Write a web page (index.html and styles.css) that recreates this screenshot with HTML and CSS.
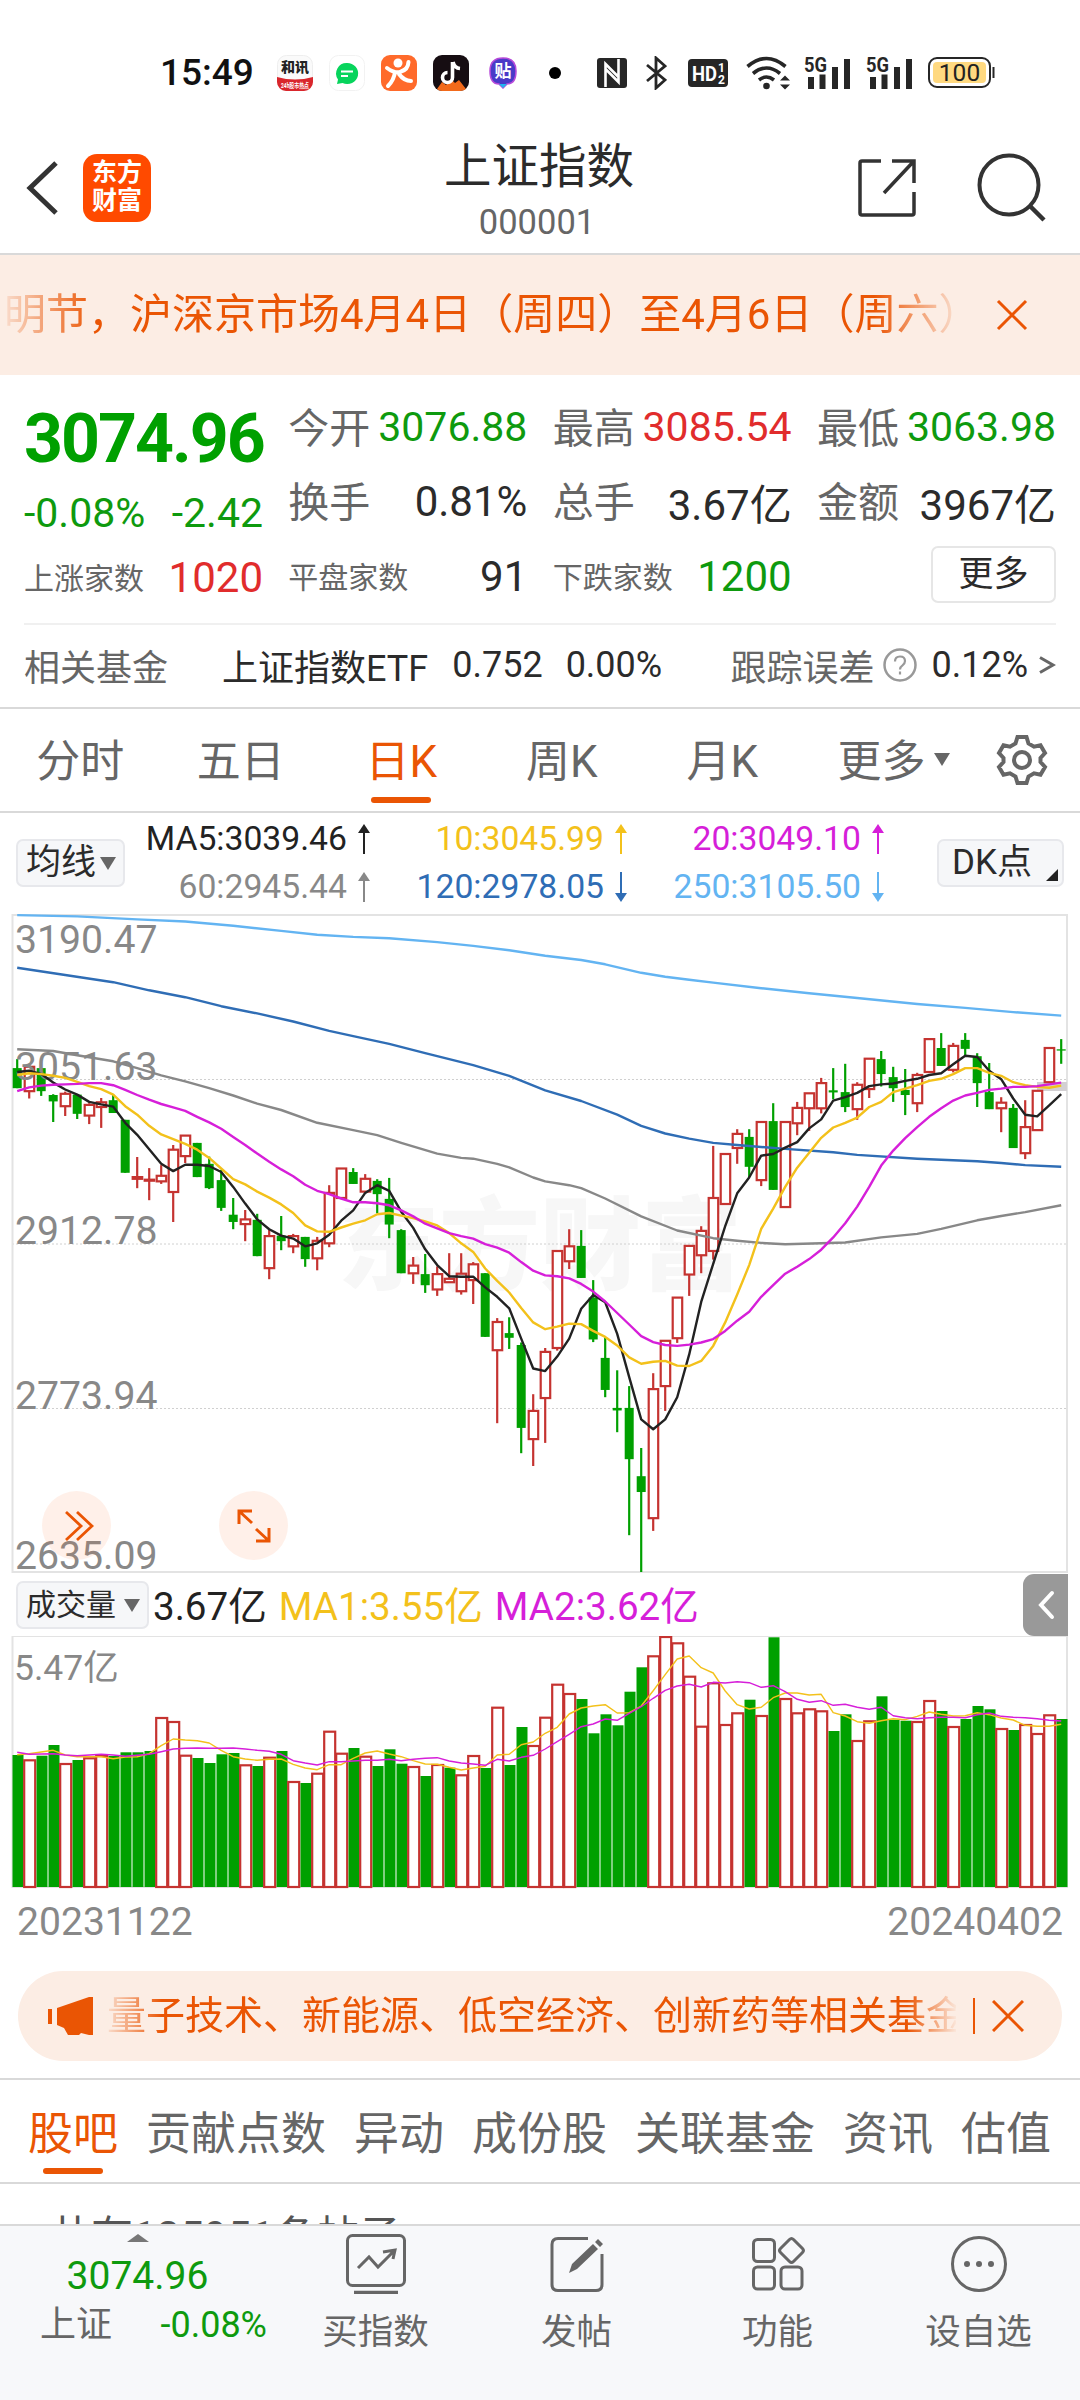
FILE: index.html
```html
<!DOCTYPE html>
<html lang="zh-CN">
<head>
  <meta charset="UTF-8">
  <title>上证指数 000001</title>
  <link rel="stylesheet" href="styles.css">
</head>
<body>

<!-- 状态栏 -->
<div class="status">
  <span class="time">15:49</span>
  <svg class="app app-hx" width="36" height="36" viewBox="0 0 36 36">
    <rect x=".5" y=".5" width="35" height="35" rx="9" fill="#fafafa" stroke="#eee"/>
    <path d="M0 22q18 5 36 0v5a9 9 0 0 1-9 9H9a9 9 0 0 1-9-9z" fill="#d9262c"/>
    <text x="18" y="17" font-size="14" font-weight="900" text-anchor="middle" fill="#222">和讯</text>
    <text x="18" y="32.500" font-size="6.500" font-weight="700" text-anchor="middle" fill="#fff" textLength="28" lengthAdjust="spacingAndGlyphs">24h股市热点</text>
  </svg>
  <svg class="app" width="36" height="36" viewBox="0 0 36 36">
    <rect x=".5" y=".5" width="35" height="35" rx="9" fill="#fff" stroke="#f2f2f2"/>
    <path d="M18 8a11 10.500 0 1 1-4.500 20L8 29l1-4.500A10.500 10.500 0 0 1 18 8z" fill="#07d45c"/>
    <path d="M12 16.500h12M12 21h7" stroke="#fff" stroke-width="2"/>
  </svg>
  <svg class="app" width="36" height="36" viewBox="0 0 36 36">
    <rect width="36" height="36" rx="9" fill="#ff6a2b"/>
    <circle cx="17" cy="8" r="4.500" fill="#fff"/>
    <path d="M6 13q8 6 14 3.500q7-2 7.500-9.500M14 17q-1 8-7 14M18 19q5 7 12 7" fill="none" stroke="#fff" stroke-width="4" stroke-linecap="round"/>
  </svg>
  <svg class="app" width="36" height="36" viewBox="0 0 36 36">
    <rect width="36" height="36" rx="9" fill="#160d12"/>
    <path d="M4 34l5-7 4 3 5-6 4 4 4-3 7 9q-3 2-6 2H9q-3 0-5-2z" fill="#f26a1b"/>
    <path d="M19.500 7v15.500a5 5 0 1 1-5-5M20 7q1.500 6 7 6.500" fill="none" stroke="#fff" stroke-width="3.600"/>
  </svg>
  <svg class="app app-tie" width="28" height="32" viewBox="0 0 28 32">
    <path d="M14 1q13 0 13 13t-9 13l-4 4-4-4Q1 27 1 14T14 1z" fill="#4a3ac8" stroke="#b74ad9" stroke-width="1.500"/>
    <path d="M10 27l4 4 4-4z" fill="#20b4ee"/>
    <text x="14" y="20" font-size="17" font-weight="700" text-anchor="middle" fill="#fff">贴</text>
  </svg>
  <i class="more-dot"></i>
  <svg class="nfc" width="30" height="30" viewBox="0 0 30 30">
    <rect width="30" height="30" rx="3" fill="#262626"/>
    <path d="M8.500 29V6l13 13M21.500 1v23l-13-13" fill="none" stroke="#fff" stroke-width="2.600"/>
  </svg>
  <svg class="bt" width="21" height="34" viewBox="0 0 21 34">
    <path d="M1 9l18 15-9 8V2l9 8L1 25" fill="none" stroke="#262626" stroke-width="2.800"/>
  </svg>
  <svg class="hd" width="40" height="28" viewBox="0 0 40 28">
    <rect width="40" height="28" rx="4" fill="#262626"/>
    <text x="4" y="21.500" font-size="21" font-weight="700" fill="#fff" textLength="25" lengthAdjust="spacingAndGlyphs">HD</text>
    <text x="30" y="13" font-size="12" font-weight="700" fill="#fff">1</text>
    <text x="30" y="25" font-size="12" font-weight="700" fill="#fff">2</text>
  </svg>
  <svg class="wifi" width="45" height="34" viewBox="0 0 45 34">
    <path d="M1.500 10.500q19-16 38 0M7 17.500q13.500-11 27 0M13 24q7.500-6 15 0" fill="none" stroke="#262626" stroke-width="3.600"/>
    <circle cx="20.500" cy="30" r="3.300" fill="#262626"/>
    <path d="M34 24.500l5-5 5 5zM34 28.500l5 5 5-5z" fill="#262626"/>
  </svg>
  <svg class="signal" width="46" height="34" viewBox="0 0 46 34">
    <text x="0" y="16" font-size="20" font-weight="700" fill="#262626" textLength="23" lengthAdjust="spacingAndGlyphs">5G</text>
    <path d="M7 21v12M18.500 18.500V33M31 11v22M43 3v30" stroke="#262626" stroke-width="6"/>
  </svg>
  <svg class="signal" width="46" height="34" viewBox="0 0 46 34">
    <text x="0" y="16" font-size="20" font-weight="700" fill="#262626" textLength="23" lengthAdjust="spacingAndGlyphs">5G</text>
    <path d="M7 21v12M18.500 18.500V33M31 11v22M43 3v30" stroke="#262626" stroke-width="6"/>
  </svg>
  <svg class="battery" width="67" height="31" viewBox="0 0 67 31">
    <rect x="1" y="1" width="61" height="29" rx="8" fill="#fff" stroke="#262626" stroke-width="2"/>
    <rect x="5" y="5" width="53" height="21" rx="4" fill="#ffd980"/>
    <path d="M65.500 10v11" stroke="#262626" stroke-width="2"/>
    <text x="31.500" y="24" font-size="24.500" text-anchor="middle" fill="#222">100</text>
  </svg>
</div>

<!-- 标题 -->
<div class="header">
  <svg class="back" width="33" height="56" viewBox="0 0 33 56"><path d="M30 3L4 28l26 25" fill="none" stroke="#333" stroke-width="5"/></svg>
  <div class="logo"><span>东方</span><span>财富</span></div>
  <div class="title">
    <h1>上证指数</h1>
    <p>000001</p>
  </div>
  <svg class="share" width="60" height="60" viewBox="0 0 60 60">
    <path d="M24 3H5q-2 0-2 2v50q0 2 2 2h50q2 0 2-2V34M35 3h22v22M57 3L27 35" fill="none" stroke="#333" stroke-width="3.500"/>
  </svg>
  <svg class="search" width="70" height="70" viewBox="0 0 70 70">
    <circle cx="32" cy="32" r="29.500" fill="none" stroke="#333" stroke-width="4"/>
    <path d="M53 53l14 14" stroke="#333" stroke-width="4.500"/>
  </svg>
</div>

<!-- 公告 -->
<div class="notice">
  <div class="notice-text">明节，沪深京市场4月4日（周四）至4月6日（周六）</div>
  <svg width="32" height="32" viewBox="0 0 32 32"><path d="M2 2l28 28M30 2L2 30" stroke="#ea5504" stroke-width="3"/></svg>
</div>

<!-- 行情摘要 -->
<div class="quote">
  <div class="q-col q-main">
    <div class="price">3074.96</div>
    <div class="pair change"><b>-0.08%</b><b>-2.42</b></div>
    <div class="pair small"><span>上涨家数</span><b class="red">1020</b></div>
  </div>
  <div class="q-col">
    <div class="pair"><span>今开</span><b class="green">3076.88</b></div>
    <div class="pair wide"><span>换手</span><b>0.81%</b></div>
    <div class="pair small"><span>平盘家数</span><b>91</b></div>
  </div>
  <div class="q-col">
    <div class="pair"><span>最高</span><b class="red">3085.54</b></div>
    <div class="pair wide"><span>总手</span><b>3.67亿</b></div>
    <div class="pair small"><span>下跌家数</span><b class="green">1200</b></div>
  </div>
  <div class="q-col">
    <div class="pair"><span>最低</span><b class="green">3063.98</b></div>
    <div class="pair wide"><span>金额</span><b>3967亿</b></div>
    <div class="pair small more-row"><a class="more-btn">更多</a></div>
  </div>
</div>
<div class="fund">
  <span class="muted">相关基金</span>
  <span class="fund-name">上证指数ETF</span>
  <span class="fund-price">0.752</span>
  <span class="fund-rate">0.00%</span>
  <span class="muted fund-err">跟踪误差</span>
  <svg width="34" height="34" viewBox="0 0 34 34">
    <circle cx="17" cy="17" r="15.500" fill="none" stroke="#999" stroke-width="2.500"/>
    <path d="M12 13.500q0-5 5-5t5 4.500q0 2.500-2.500 4.300Q17 19 17 21.500M17 23.500v3" fill="none" stroke="#999" stroke-width="2.200"/>
  </svg>
  <span>0.12%</span>
  <svg class="fund-go" width="17" height="18" viewBox="0 0 17 18"><path d="M1 1.500L14 9 1 16.500" fill="none" stroke="#666" stroke-width="3"/></svg>
</div>

<!-- 周期切换 -->
<div class="tabs">
  <a>分时</a>
  <a>五日</a>
  <a class="active">日K</a>
  <a>周K</a>
  <a>月K</a>
  <a class="tab-more">更多<i class="tri"></i></a>
  <svg width="52" height="52" viewBox="0 0 52 52" fill="none" stroke="#666" stroke-width="4">
    <path d="M21.500 3h9l2 6.500 5.500 3.200 6.500-1.500 4.500 7.800-4.500 5v4l4.500 5-4.500 7.800-6.500-1.500-5.500 3.200-2 6.500h-9l-2-6.500-5.500-3.200-6.500 1.500L3 33l4.500-5v-4L3 19l4.500-7.800 6.500 1.500 5.500-3.200z"/>
    <circle cx="26" cy="26" r="8"/>
  </svg>
</div>

<!-- 均线数值 -->
<div class="ma">
  <a class="chip">均线<i class="tri"></i></a>
  <div class="ma-grid">
    <span class="c5">MA5:3039.46<svg class="arrow"><use href="#up"/></svg></span>
    <span class="c10">10:3045.99<svg class="arrow"><use href="#up"/></svg></span>
    <span class="c20">20:3049.10<svg class="arrow"><use href="#up"/></svg></span>
    <span class="c60">60:2945.44<svg class="arrow"><use href="#up"/></svg></span>
    <span class="c120">120:2978.05<svg class="arrow"><use href="#down"/></svg></span>
    <span class="c250">250:3105.50<svg class="arrow"><use href="#down"/></svg></span>
  </div>
  <a class="chip dk">DK点<i class="corner"></i></a>
</div>
<svg class="defs">
  <symbol id="up" viewBox="0 0 12 30"><path d="M6 5v25" stroke="currentColor" stroke-width="2"/><path d="M0 9l6-9 6 9z" fill="currentColor"/></symbol>
  <symbol id="down" viewBox="0 0 12 30"><path d="M6 0v25" stroke="currentColor" stroke-width="2"/><path d="M0 21l6 9 6-9z" fill="currentColor"/></symbol>
</svg>

<!-- K线图 -->
<div class="kline">
  <svg id="kline" width="1080" height="664" viewBox="0 0 1080 664"></svg>
  <div class="round round-left">
    <svg width="30" height="32" viewBox="0 0 30 32"><path d="M2 2l15 14L2 30M13 2l15 14-15 14" fill="none" stroke="#ea5504" stroke-width="2.800"/></svg>
  </div>
  <div class="round round-right">
    <svg width="34" height="34" viewBox="0 0 34 34"><path d="M15 2H2v13M2 2l13 12M32 19v13H19M32 32L19 20" fill="none" stroke="#ea5504" stroke-width="3"/></svg>
  </div>
</div>

<!-- 成交量 -->
<div class="vol-head">
  <a class="chip vol-chip">成交量<i class="tri"></i></a>
  <span class="c5">3.67亿</span>
  <span class="c10">MA1:3.55亿</span>
  <span class="c20">MA2:3.62亿</span>
  <div class="handle"><svg width="18" height="30" viewBox="0 0 18 30"><path d="M15 3L4 15l11 12" fill="none" stroke="#fff" stroke-width="4" stroke-linecap="round"/></svg></div>
</div>
<svg id="volume" width="1080" height="254" viewBox="0 0 1080 254"></svg>
<div class="dates"><span>20231122</span><span>20240402</span></div>

<!-- 推荐条 -->
<div class="banner">
  <svg class="horn" width="46" height="42" viewBox="0 0 46 42">
    <path d="M0 14h4v15H0zM9 13L41 2h4v38h-4l-8-2-2 2H20l-4-7-7-3z" fill="#ea5504"/>
  </svg>
  <div class="banner-text">量子技术、新能源、低空经济、创新药等相关基金</div>
  <i class="bar"></i>
  <svg width="32" height="32" viewBox="0 0 32 32"><path d="M1 1l30 30M31 1L1 31" stroke="#ea5504" stroke-width="3"/></svg>
</div>

<!-- 内容标签 -->
<div class="sections">
  <a class="active">股吧</a><a>贡献点数</a><a>异动</a><a>成份股</a><a>关联基金</a><a>资讯</a><a>估值</a>
</div>
<div class="posts">共有125951条帖子</div>

<!-- 底部栏 -->
<div class="bottom">
  <div class="index">
    <i class="tri-up"></i>
    <div class="index-price">3074.96</div>
    <div class="index-row"><span>上证</span><b>-0.08%</b></div>
  </div>
  <a>
    <svg width="60" height="60" viewBox="0 0 60 60" fill="none" stroke="#666" stroke-width="3">
      <rect x="1.500" y="1.500" width="57" height="50" rx="5"/><path d="M8 58.500h44" stroke-width="3.500"/>
      <path d="M12 34l11-11 9 10 16-16M37 18l12-2-2 9"/>
    </svg>
    <span>买指数</span>
  </a>
  <a>
    <svg width="60" height="60" viewBox="0 0 60 60" fill="none" stroke="#666" stroke-width="3">
      <path d="M41 4.500H11q-6 0-6 6v40q0 6 6 6h38q6 0 6-6V20"/>
      <path d="M22 39l3-9 21-20 5 5-21 20z M48 8l3-3 5 5-3 3z" fill="#666" stroke="none"/>
    </svg>
    <span>发帖</span>
  </a>
  <a>
    <svg width="60" height="60" viewBox="0 0 60 60" fill="none" stroke="#666" stroke-width="3">
      <rect x="5.500" y="5.500" width="21" height="22" rx="4"/><rect x="5.500" y="33" width="21" height="22" rx="4"/><rect x="33" y="33" width="21" height="22" rx="4"/>
      <path d="M41.500 5.500q2-2 4 0l9 9q2 2 0 4l-9 9q-2 2-4 0l-9-9q-2-2 0-4z"/>
    </svg>
    <span>功能</span>
  </a>
  <a>
    <svg width="60" height="60" viewBox="0 0 60 60">
      <circle cx="30" cy="30" r="26.500" fill="none" stroke="#666" stroke-width="3"/>
      <circle cx="18" cy="30" r="3" fill="#666"/><circle cx="30" cy="30" r="3" fill="#666"/><circle cx="42" cy="30" r="3" fill="#666"/>
    </svg>
    <span>设自选</span>
  </a>
</div>

<script src="script.js"></script>
</body>
</html>
```

FILE: styles.css
```css
/* 基本 */
* {
  box-sizing: border-box;
}
body {
  margin: 0;
  width: 1080px;
  height: 2400px;
  overflow: hidden;
  background: #fff;
  color: #2b2b2b;
  font-family: Roboto, "Noto Sans CJK SC", sans-serif;
}
svg {
  display: block;
  flex: none;
}
b, h1 {
  font-weight: 400;
}
.red { color: #e12c2c; }
.green { color: #0e9a0e; }
.muted { color: #666; }
.defs {
  display: none;
}

/* 状态栏 */
.status {
  height: 114px;
  padding: 31px 0 0 160px;
  display: flex;
  align-items: center;
}
.status .time {
  width: 117px;
  font-size: 37px;
  font-weight: 500;
  line-height: 50px;
  color: #111;
}
.app {
  margin-right: 16px;
}
.app-tie {
  margin: 0 32px 0 4px;
}
.more-dot {
  width: 12px;
  height: 12px;
  border-radius: 50%;
  background: #000;
  margin-right: 36px;
}
.nfc { margin-right: 19px; }
.bt { margin-right: 21px; }
.hd { margin-right: 18px; }
.wifi { margin-right: 13px; }
.signal {
  margin-right: 16px;
  overflow: visible;
}

/* 标题 */
.header {
  position: relative;
  height: 141px;
  border-bottom: 2px solid #d9d9d9;
  display: flex;
  align-items: center;
  padding: 8px 33px 0 26px;
}
.logo {
  width: 68px;
  height: 68px;
  margin-left: 24px;
  border-radius: 14px;
  background: #ff4a00;
  color: #fff;
  font-size: 25px;
  font-weight: 700;
  line-height: 28px;
  padding-top: 5px;
  text-align: center;
}
.logo span {
  display: block;
}
.title {
  position: absolute;
  left: 0;
  right: 6px;
  top: 22px;
  text-align: center;
}
.title h1 {
  margin: 0;
  padding-left: 4px;
  font-size: 47.5px;
  line-height: 62px;
}
.title p {
  margin: 4px 0 0;
  font-size: 34.500px;
  line-height: 40px;
  color: #666;
}
.share {
  margin-left: auto;
}
.search {
  margin-left: 60px;
}

/* 公告 */
.notice {
  height: 120px;
  background: #fcede4;
  color: #ea5504;
  display: flex;
  align-items: center;
  padding: 0 52px 0 4px;
  justify-content: space-between;
}
.notice-text {
  width: 952px;
  overflow: hidden;
  white-space: nowrap;
  font-size: 42px;
  line-height: 60px;
  -webkit-mask-image: linear-gradient(to right, rgba(0,0,0,.1), #000 90px, #000 870px, rgba(0,0,0,.1));
}

/* 行情摘要 */
.quote {
  height: 250px;
  margin: 0 24px;
  padding-top: 15px;
  display: flex;
  justify-content: space-between;
  border-bottom: 2px solid #f0f0f0;
}
.q-col {
  width: 239px;
}
.pair {
  height: 74.500px;
  display: flex;
  align-items: center;
  justify-content: space-between;
  font-size: 41px;
  white-space: nowrap;
}
.pair span {
  color: #666;
  padding-bottom: 5px;
}
.wide b,
.small b {
  font-size: 42px;
}
.small span {
  font-size: 30px;
  padding-bottom: 2px;
}
.price {
  height: 95px;
  line-height: 98px;
  font-size: 68px;
  font-weight: 700;
  color: #00a000;
  letter-spacing: -2px;
}
.pair.change {
  height: 56px;
  color: #0e9a0e;
}
.q-main .small {
  height: 72px;
}
.more-row {
  justify-content: flex-end;
  padding-bottom: 4px;
}
.more-btn {
  width: 125px;
  height: 57px;
  line-height: 53px;
  border: 2px solid #e6e6e6;
  border-radius: 7px;
  font-size: 35px;
  text-align: center;
}

/* 相关基金 */
.fund {
  height: 84px;
  border-bottom: 2px solid #d9d9d9;
  padding: 0 24px 2px;
  display: flex;
  align-items: center;
  font-size: 36px;
  white-space: nowrap;
}
.fund-name { margin-left: 54px; }
.fund-price { margin-left: 24px; }
.fund-rate { margin-left: 23px; }
.fund-err {
  margin: 0 9px 0 auto;
}
.fund-err + svg {
  margin-right: 14px;
}
.fund-go {
  margin-left: 11px;
}

/* 周期切换 */
.tabs {
  height: 104px;
  border-bottom: 2px solid #d9d9d9;
  display: flex;
  align-items: center;
  font-size: 44px;
  color: #666;
}
.tabs a {
  position: relative;
  width: 160.500px;
  padding-top: 5px;
  text-align: center;
  line-height: 97px;
}
.active {
  color: #ea5504;
}
.active::after {
  content: "";
  position: absolute;
  left: 50%;
  bottom: 8px;
  width: 60px;
  height: 6px;
  margin-left: -30px;
  border-radius: 3px;
  background: #ea5504;
}
.tabs .tab-more {
  width: 112px;
  margin: 0 46px 0 35px;
  display: flex;
  align-items: center;
  justify-content: space-between;
}
.tri {
  border: 8px solid transparent;
  border-top: 13px solid #666;
  border-bottom: 0;
}
.tab-more .tri {
  margin-bottom: 6px;
}

/* 均线数值 */
.ma {
  height: 97px;
  padding: 3px 16px 0;
  display: flex;
  justify-content: space-between;
  align-items: center;
}
.chip {
  height: 48px;
  border: 2px solid #e7e8ec;
  border-radius: 7px;
  background: #f6f7f9;
  display: flex;
  align-items: center;
  justify-content: space-between;
  font-size: 35px;
  line-height: 44px;
  padding: 0 7px 0 8px;
  width: 109px;
}
.dk {
  width: 127px;
  padding: 0 4px 0 13px;
}
.corner {
  align-self: flex-end;
  margin-bottom: 4px;
  border-left: 12px solid transparent;
  border-bottom: 12px solid #222;
}
.ma-grid {
  flex: 1;
  display: grid;
  grid-template-columns: 245px 257px 257px;
  line-height: 48px;
  font-size: 33.700px;
}
.ma-grid span {
  display: flex;
  align-items: center;
  justify-content: flex-end;
}
.arrow {
  width: 12px;
  height: 30px;
  margin-left: 11px;
}
.c5 { color: #222; }
.c10 { color: #f3c11b; }
.c20 { color: #d61fd9; }
.c60 { color: #888; }
.c120 { color: #2f6db5; }
.c250 { color: #63b4f2; }

/* K线图 */
.kline {
  position: relative;
  height: 664px;
}
.round {
  position: absolute;
  top: 581px;
  width: 69px;
  height: 69px;
  border-radius: 50%;
  background: rgba(255, 110, 40, .1);
  display: flex;
  align-items: center;
  justify-content: center;
}
.round-left {
  left: 42px;
  padding-left: 5px;
}
.round-right { left: 219px; }
.axis {
  font-size: 39.200px;
  fill: #888;
}
.axis-vol {
  font-size: 35.500px;
}
.mark {
  font-size: 101px;
  font-weight: 900;
  fill: #f7f7f7;
}
.frame {
  fill: none;
  stroke: #e3e3e3;
  stroke-width: 2;
}
.grid {
  stroke: #d0d0d0;
  stroke-width: 1;
  stroke-dasharray: 2 2;
}
.up {
  fill: #fff;
  stroke: #c53330;
  stroke-width: 2.200;
}
.down {
  fill: #00a000;
}
.wick-up { stroke: #c53330; stroke-width: 2.200; }
.wick-down { stroke: #00a000; stroke-width: 2.200; }
.line {
  fill: none;
  stroke: currentColor;
  stroke-width: 2.400;
  stroke-linejoin: round;
}
.thin {
  stroke-width: 1.400;
}

/* 成交量 */
.vol-head {
  height: 62px;
  padding: 0 12px 0 16px;
  display: flex;
  align-items: center;
  font-size: 38.600px;
}
.vol-head span {
  margin-right: 12px;
  padding-bottom: 5px;
}
.vol-chip {
  width: 133px;
  margin-right: 4px;
  font-size: 30px;
}
.handle {
  width: 45px;
  height: 62px;
  margin-left: auto;
  border-radius: 11px 0 0 11px;
  background: #999;
  display: flex;
  align-items: center;
  justify-content: center;
}
.dates {
  height: 81px;
  padding: 6px 17px 0;
  display: flex;
  justify-content: space-between;
  font-size: 39.100px;
  line-height: 52px;
  color: #888;
}

/* 推荐条 */
.banner {
  height: 90px;
  margin: 0 18px;
  padding: 0 38px 0 30px;
  border-radius: 45px;
  background: #fcede4;
  color: #ea5504;
  display: flex;
  align-items: center;
}
.banner-text {
  width: 850px;
  margin-left: 13px;
  overflow: hidden;
  white-space: nowrap;
  font-size: 39px;
  line-height: 56px;
  -webkit-mask-image: linear-gradient(to right, rgba(0,0,0,.1), #000 55px, #000 800px, rgba(0,0,0,.05));
}
.bar {
  width: 2px;
  height: 36px;
  margin: 0 17px;
  background: #ea5504;
}

/* 内容标签 */
.sections {
  height: 106px;
  margin-top: 17px;
  border-top: 2px solid #d9d9d9;
  border-bottom: 2px solid #d9d9d9;
  padding: 2px 0 0 28px;
  display: flex;
  gap: 28px;
  font-size: 45px;
  line-height: 105px;
  color: #666;
  white-space: nowrap;
}
.sections a {
  position: relative;
}
.sections .active {
  color: #ea5504;
}
.posts {
  height: 40px;
  padding: 27px 0 0 49px;
  font-size: 42px;
  line-height: 52px;
  color: #555;
  overflow: hidden;
}

/* 底部栏 */
.bottom {
  position: relative;
  height: 177px;
  border-top: 2px solid #d9d9d9;
  background: #f7f8fa;
  display: flex;
  padding-top: 8px;
}
.index {
  width: 275px;
  color: #0e9a0e;
}
.tri-up {
  display: block;
  width: 0;
  margin-left: 127px;
  border: 11px solid transparent;
  border-bottom: 8px solid #777;
  border-top: 0;
}
.index-price {
  margin-top: 9px;
  font-size: 39px;
  line-height: 50px;
  text-align: center;
}
.index-row {
  display: flex;
  justify-content: space-between;
  padding: 0 8px 0 40px;
  font-size: 36px;
  line-height: 48px;
}
.index-row span {
  color: #666;
}
.bottom a {
  width: 201px;
  display: flex;
  flex-direction: column;
  align-items: center;
  font-size: 35.500px;
  line-height: 48px;
  color: #666;
}
.bottom a span {
  margin-top: 14px;
}
```

FILE: script.js
```js
// K线: [最高, 实体上沿, 实体下沿, 最低], 末位 1 为阳线
const candles = [
  [349,370,417,417,0],[360,367,424,441,1],[370,370,424,435,0],[431,433,448,496,0],[425,430,459,482,1],
  [432,432,477,489,0],[452,456,481,501,1],[440,450,461,510,1],[432,445,475,475,0],[491,491,615,615,0],
  [578,625,629,651,1],[604,631,633,679,1],[597,622,635,641,1],[550,561,660,730,1],[528,528,576,592,1],
  [545,545,625,625,0],[577,594,651,653,0],[608,632,697,704,0],[674,713,730,747,0],[702,724,735,775,1],
  [711,725,810,810,0],[748,763,838,864,1],[716,762,775,796,0],[758,763,787,803,1],[765,765,817,835,0],
  [765,774,815,843,1],[644,662,780,789,1],[605,605,674,674,1],[604,613,641,641,0],[618,629,659,659,1],
  [630,634,665,710,0],[627,676,736,768,0],[747,749,850,850,0],[812,832,850,875,1],[805,852,878,896,0],
  [834,852,888,903,1],[803,863,871,871,1],[803,851,892,900,1],[824,829,866,922,1],[850,850,999,999,0],
  [955,964,1030,1201,1],[953,990,1001,1027,0],[1012,1018,1212,1271,0],[1133,1172,1238,1301,1],[1025,1034,1142,1247,1],
  [798,798,1025,1031,1],[747,787,822,840,1],[749,786,861,861,0],[866,907,1005,1011,0],[1000,1048,1123,1140,0],
  [1077,1165,1171,1222,0],[1114,1165,1285,1463,0],[1259,1325,1362,1549,0],[1084,1121,1423,1453,1],[1008,1008,1114,1172,1],
  [907,907,1002,1013,1],[786,786,853,903,1],[740,751,808,850,1],[552,674,798,818,1],[571,571,688,688,1],
  [513,524,557,594,1],[513,531,601,625,0],[496,496,632,646,1],[452,494,655,655,0],[496,496,695,695,1],
  [449,463,499,527,1],[429,429,464,517,1],[393,405,464,476,1],[370,422,427,443,0],[360,426,461,473,0],
  [403,409,466,491,1],[348,348,419,440,1],[330,349,384,413,0],[367,391,417,449,0],[372,421,433,480,0],
  [381,386,452,473,1],[302,302,379,379,1],[288,323,365,365,0],[311,318,374,380,1],[288,304,325,343,0],
  [335,342,405,461,0],[358,426,466,466,0],[438,451,464,520,1],[454,463,557,557,0],[445,508,569,583,1],
  [423,423,515,515,1],[323,323,403,403,1],[302,326,329,360,0]
];

const ma5 = [379,376,384,404,420,432,449,455,460,498,526,560,594,611,596,596,599,613,648,687,724,747,762,769,787,780,760,727,703,662,644,657,706,744,794,831,857,858,858,883,905,932,1003,1073,1079,1045,1003,933,901,918,992,1093,1192,1215,1192,1140,1040,917,828,740,663,626,575,571,556,543,511,490,446,438,428,412,408,406,400,395,386,382,361,341,344,376,396,441,479,483,457,431];
const ma10 = [386,382,384,388,393,402,412,419,432,459,479,505,525,536,547,561,580,605,630,642,659,673,689,709,738,752,753,743,734,726,712,709,715,721,729,738,756,780,800,839,868,895,931,965,981,975,968,969,985,999,1019,1047,1062,1057,1055,1066,1067,1055,1020,965,900,831,746,699,648,603,568,533,509,498,486,461,449,426,418,410,400,395,384,370,370,381,388,403,410,414,416,411];
const ma20 = [424,415,411,409,408,407,405,405,410,421,433,444,454,462,470,484,497,512,531,550,570,589,607,623,643,657,665,675,684,684,686,691,703,717,734,745,756,763,769,782,790,802,824,844,855,857,862,875,893,916,943,970,997,1011,1018,1020,1017,1012,1004,985,961,940,905,878,851,835,817,795,766,733,694,648,598,563,534,508,484,464,446,434,428,421,418,414,414,412,408,404];

// 长周期均线: [序号, 位置]
const ma60 = [[0,326],[3,330],[5,340],[8,354],[10,370],[12,387],[14,401],[16,417],[18,434],[20,453],[22,468],[25,498],[28,515],[30,527],[32,545],[35,570],[37,580],[38,582],[40,594],[41,602],[43,626],[44,635],[46,644],[47,651],[49,675],[52,717],[55,750],[58,768],[60,774],[62,779],[64,782],[67,780],[69,778],[72,766],[75,758],[77,746],[80,726],[82,716],[84,707],[87,691]];
const ma120 = [[0,135],[4,152],[8,169],[11,188],[14,204],[17,225],[20,242],[23,261],[26,283],[28,295],[31,313],[34,335],[38,363],[41,388],[44,422],[47,447],[50,479],[52,505],[54,523],[56,535],[58,545],[60,550],[64,559],[68,567],[70,573],[75,582],[80,588],[82,592],[84,597],[87,601]];
const ma250 = [[0,12],[5,15],[10,22],[14,27],[18,37],[22,49],[25,58],[28,63],[31,66],[35,75],[38,84],[41,94],[44,107],[47,117],[49,127],[52,147],[54,156],[56,163],[58,170],[62,183],[66,195],[70,206],[75,220],[79,229],[83,239],[87,247]];

// 成交量柱顶位置, g 跌 r 涨
const vols = 'g585 r601 g587 g555 r612 g600 r595 r588 g588 g577 g577 g573 r474 r486 r587 g594 g609 g583 g579 r616 g618 r593 g573 r666 g669 r641 r515 r581 g564 r590 g618 g568 g611 r621 g648 r615 g623 r646 r588 g624 r443 g615 g501 r558 r473 r374 r402 g417 g520 g463 g496 g395 g322 r289 r231 r250 r350 r500 r370 r495 r460 g419 r468 g232 r417 r460 r448 r454 g513 g463 r543 r484 g409 g479 g482 r486 r423 g453 r501 g477 g438 g448 r507 g510 r495 r522 r466 g477'.split(' ');
const volMa5 = [584,581,576,571,585,590,590,590,596,591,590,581,557,537,540,542,549,571,590,597,601,598,597,613,624,629,614,614,595,579,573,582,590,602,612,613,622,630,624,619,585,583,554,546,520,502,462,444,438,434,459,458,438,392,344,297,288,323,339,393,434,447,442,413,399,399,405,403,458,468,485,490,482,476,479,469,456,463,468,467,458,464,474,480,496,499,499,493];
const volMa10 = [577,583,582,581,585,587,585,583,585,589,586,583,575,567,565,564,565,565,564,567,571,574,583,602,609,615,605,605,603,601,601,598,602,598,595,593,603,609,612,616,598,603,592,586,567,545,523,500,492,477,481,460,440,415,391,378,373,381,367,369,365,368,382,377,395,418,427,422,436,433,442,448,442,467,473,476,473,472,472,473,464,459,469,472,473,476,481,483];

const X0 = 17.2;
const STEP = 12;
const x = i => X0 + STEP * i;
const ky = v => (v / 2.34).toFixed(1);
const vy = v => (v / 3 - 76).toFixed(1);

function line(data, y, cls) {
  const pts = data.map((d, i) => Array.isArray(d) ? x(d[0]) + ',' + y(d[1]) : x(i) + ',' + y(d));
  return `<polyline class="line ${cls}" points="${pts.join(' ')}"/>`;
}

// K线图
let k = '<text class="mark" x="338" y="372">东方财富</text>';
[169.5, 334, 498.5].forEach(y => k += `<line class="grid" x1="12" x2="1067" y1="${y}" y2="${y}"/>`);
k += '<rect class="frame" x="12.500" y="5" width="1054.500" height="657"/>';
k += '<rect x="1037" y="172" width="30" height="9" fill="#d3d0d3"/>';
candles.forEach((c, i) => {
  const [hi, top, bot, lo, up] = c;
  k += `<line class="${up ? 'wick-up' : 'wick-down'}" x1="${x(i)}" x2="${x(i)}" y1="${ky(hi)}" y2="${ky(lo)}"/>`;
  const h = Math.max((bot - top) / 2.34, 1);
  k += up
    ? `<rect class="up" x="${x(i) - 4.5}" y="${ky(top)}" width="9.500" height="${h}"/>`
    : `<rect class="down" x="${x(i) - 4.5}" y="${ky(top)}" width="9" height="${h}"/>`;
});
[['3190.47', 43], ['3051.63', 169.5], ['2912.78', 334], ['2773.94', 498.5], ['2635.09', 658.5]].forEach(a => {
  k += `<text class="axis" x="15" y="${a[1]}">${a[0]}</text>`;
});
k += line(ma250, ky, 'c250') + line(ma120, ky, 'c120') + line(ma60, ky, 'c60');
k += line(ma5, ky, 'c5') + line(ma10, ky, 'c10') + line(ma20, ky, 'c20');
document.getElementById('kline').innerHTML = k;

// 成交量图
let v = '<rect class="frame" x="12.500" y="0" width="1054.500" height="251"/>';
vols.forEach((s, i) => {
  const y = +vy(s.slice(1));
  v += s[0] === 'r'
    ? `<rect class="up" x="${x(i) - 5}" y="${y}" width="11" height="${251 - y}"/>`
    : `<rect class="down" x="${x(i) - 4.7}" y="${y}" width="11" height="${251 - y}"/>`;
});
v += '<text class="axis axis-vol" x="14" y="43.500">5.47亿</text>';
v += line(volMa5, vy, 'c10 thin') + line(volMa10, vy, 'c20 thin');
document.getElementById('volume').innerHTML = v;
```
